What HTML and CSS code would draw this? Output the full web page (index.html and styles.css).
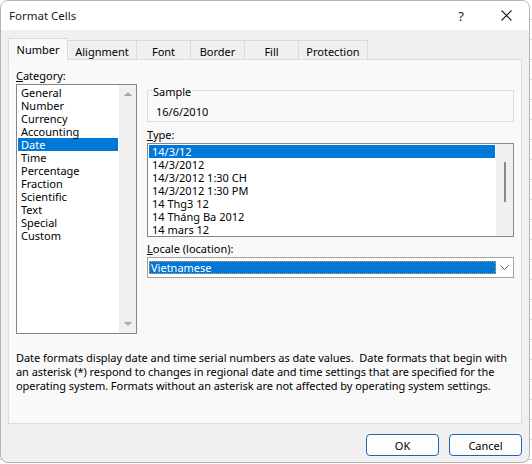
FILE: index.html
```html
<!DOCTYPE html>
<html>
<head>
<meta charset="utf-8">
<link rel="stylesheet" href="styles.css">
</head>
<body>
<div class="dialog">
  <div class="titlebar">
    <span class="title">Format Cells</span>
    <span class="help">?</span>
    <span class="close"><svg width="11" height="11" viewBox="0 0 11 11"><path d="M0.5 0.5 L10.5 10.5 M10.5 0.5 L0.5 10.5" stroke="#1a1a1a" stroke-width="1.1" fill="none"/></svg></span>
  </div>
  <div class="body">
    <div class="tabs">
      <div class="tab active w60">Number</div>
      <div class="tab w70">Alignment</div>
      <div class="tab w55">Font</div>
      <div class="tab w55">Border</div>
      <div class="tab w55">Fill</div>
      <div class="tab w70">Protection</div>
    </div>
    <div class="panel">
      <div class="cols">
        <div class="left">
          <div class="label"><u>C</u>ategory:</div>
          <div class="listbox cat">
            <div class="items">
              <div class="row">General</div>
              <div class="row">Number</div>
              <div class="row">Currency</div>
              <div class="row">Accounting</div>
              <div class="row sel">Date</div>
              <div class="row">Time</div>
              <div class="row">Percentage</div>
              <div class="row">Fraction</div>
              <div class="row">Scientific</div>
              <div class="row">Text</div>
              <div class="row">Special</div>
              <div class="row">Custom</div>
            </div>
            <div class="vscroll arrows"><span class="arrow up"></span><span class="arrow down"></span></div>
          </div>
        </div>
        <div class="right">
          <div class="group">
            <span class="legend">Sample</span>
            <div class="sample">16/6/2010</div>
          </div>
          <div class="label mt5"><u>T</u>ype:</div>
          <div class="listbox type">
            <div class="items">
              <div class="row sel">14/3/12</div>
              <div class="row">14/3/2012</div>
              <div class="row">14/3/2012 1:30 CH</div>
              <div class="row">14/3/2012 1:30 PM</div>
              <div class="row">14 Thg3 12</div>
              <div class="row">14 Tháng Ba 2012</div>
              <div class="row">14 mars 12</div>
            </div>
            <div class="vscroll"><span class="thumb"></span></div>
          </div>
          <div class="label mt4"><u>L</u>ocale (location):</div>
          <div class="combo">
            <div class="combo-value"><span class="focus">Vietnamese</span></div>
            <div class="combo-btn"><svg width="9" height="5" viewBox="0 0 9 5"><path d="M0.5 0.5 L4.5 4.5 L8.5 0.5" stroke="#5a5a5a" stroke-width="1" fill="none"/></svg></div>
          </div>
        </div>
      </div>
      <p class="desc">Date formats display date and time serial numbers as date values.&nbsp; Date formats that begin with<br>an asterisk (*) respond to changes in regional date and time settings that are specified for the<br>operating system. Formats without an asterisk are not affected by operating system settings.</p>
    </div>
    <div class="buttons">
      <button class="btn">OK</button>
      <button class="btn">Cancel</button>
    </div>
  </div>
</div>
</body>
</html>
```

FILE: styles.css
```css
html, body {
  margin: 0;
  padding: 0;
}
body {
  width: 532px;
  height: 464px;
  background-color: #ffffff;
  background-image: repeating-linear-gradient(to bottom, transparent 0, transparent 19px, #d6d6d6 19px, #d6d6d6 20px);
  font-family: "Noto Sans", "Open Sans", sans-serif;
  font-size: 11px;
  color: #000;
}
.dialog {
  width: 530px;
  height: 463px;
  box-sizing: border-box;
  border: 1px solid #b4b4b4;
  border-radius: 8px;
  overflow: hidden;
  background: #f0f0f0;
  display: flex;
  flex-direction: column;
}
.titlebar {
  height: 29px;
  background: #ffffff;
  display: flex;
  align-items: center;
  padding-left: 8px;
  flex: none;
}
.title {
  font-size: 11.5px;
  color: #1a1a1a;
}
.help {
  margin-left: auto;
  width: 46px;
  text-align: center;
  font-size: 13px;
  color: #1a1a1a;
}
.close {
  width: 45px;
  height: 29px;
  display: flex;
  align-items: center;
  justify-content: center;
}
.body {
  flex: 1;
  padding: 8px 0 0 7px;
}
.tabs {
  display: flex;
  align-items: flex-end;
  height: 21px;
}
.tab {
  box-sizing: border-box;
  height: 19px;
  border: 1px solid #dadada;
  border-bottom: none;
  background: #f0f0f0;
  margin-left: -1px;
  display: flex;
  align-items: center;
  justify-content: center;
  padding-top: 2px;
  color: #000;
}
.tab.active {
  height: 22px;
  margin-left: 0;
  margin-bottom: -1px;
  background: #f9f9f9;
  padding-top: 0;
  position: relative;
  z-index: 1;
}
.w60 { width: 60px; }
.w70 { width: 70px; }
.w55 { width: 55px; }
.panel {
  width: 514px;
  height: 365px;
  box-sizing: border-box;
  border: 1px solid #dcdcdc;
  background: #f9f9f9;
}
.cols {
  display: flex;
  padding-left: 7px;
  gap: 10px;
}
.left {
  width: 121px;
}
.right {
  width: 367px;
  padding-top: 30px;
}
.label {
  line-height: 15px;
  height: 15px;
  margin-top: 8px;
}
.label u {
  text-decoration: underline;
  text-underline-offset: 1px;
}
.mt5 { margin-top: 5px; }
.mt4 { margin-top: 4px; }
.listbox {
  margin-top: 1px;
  box-sizing: border-box;
  border: 1px solid #868686;
  background: #ffffff;
  display: flex;
}
.listbox.cat { height: 250px; }
.listbox.type { height: 94px; }
.items {
  flex: 1;
  padding: 1px;
  overflow: hidden;
}
.row {
  height: 13px;
  line-height: 13px;
  padding-left: 3px;
  white-space: nowrap;
}
.row.sel {
  background: #0078d7;
  color: #ffffff;
}
.vscroll {
  width: 17px;
  background: #f0f0f0;
  display: flex;
  flex-direction: column;
  align-items: center;
}
.vscroll.arrows {
  justify-content: space-between;
  padding: 7px 0;
  box-sizing: border-box;
}
.arrow {
  width: 0;
  height: 0;
  border-left: 4px solid transparent;
  border-right: 4px solid transparent;
}
.arrow.up { border-bottom: 4px solid #a6a6a6; }
.arrow.down { border-top: 4px solid #a6a6a6; }
.thumb {
  margin-top: 18px;
  width: 2px;
  height: 40px;
  background: #8a8a8a;
}
.group {
  box-sizing: border-box;
  height: 32px;
  border: 1px solid #dcdcdc;
}
.legend {
  display: block;
  width: fit-content;
  margin: -7px 0 0 4px;
  padding: 0 1px;
  line-height: 15px;
  background: #f9f9f9;
}
.sample {
  margin-top: 5px;
  padding-left: 8px;
  line-height: 15px;
}
.combo {
  margin-top: 1px;
  height: 21px;
  box-sizing: border-box;
  border: 1px solid #a3a3a3;
  background: #ffffff;
  display: flex;
}
.combo-value {
  flex: 1;
  padding: 3px 0 3px 1px;
}
.focus {
  display: block;
  box-sizing: border-box;
  height: 13px;
  line-height: 11px;
  background: #0078d7;
  color: #ffffff;
  border: 1px dotted #e0a050;
  padding-left: 1px;
}
.combo-btn {
  width: 17px;
  display: flex;
  align-items: center;
  justify-content: center;
}
.desc {
  margin: 17px 0 0 7px;
  line-height: 13.75px;
  white-space: nowrap;
  letter-spacing: -0.05px;
}
.buttons {
  width: 514px;
  margin-top: 10px;
  display: flex;
  justify-content: flex-end;
  gap: 10px;
}
.btn {
  width: 73px;
  height: 22px;
  box-sizing: border-box;
  border: 1px solid #1c66b3;
  border-radius: 4px;
  background: #fdfdfd;
  font-family: "Noto Sans", "Open Sans", sans-serif;
  font-size: 11px;
  color: #000;
  padding: 0;
}
```
